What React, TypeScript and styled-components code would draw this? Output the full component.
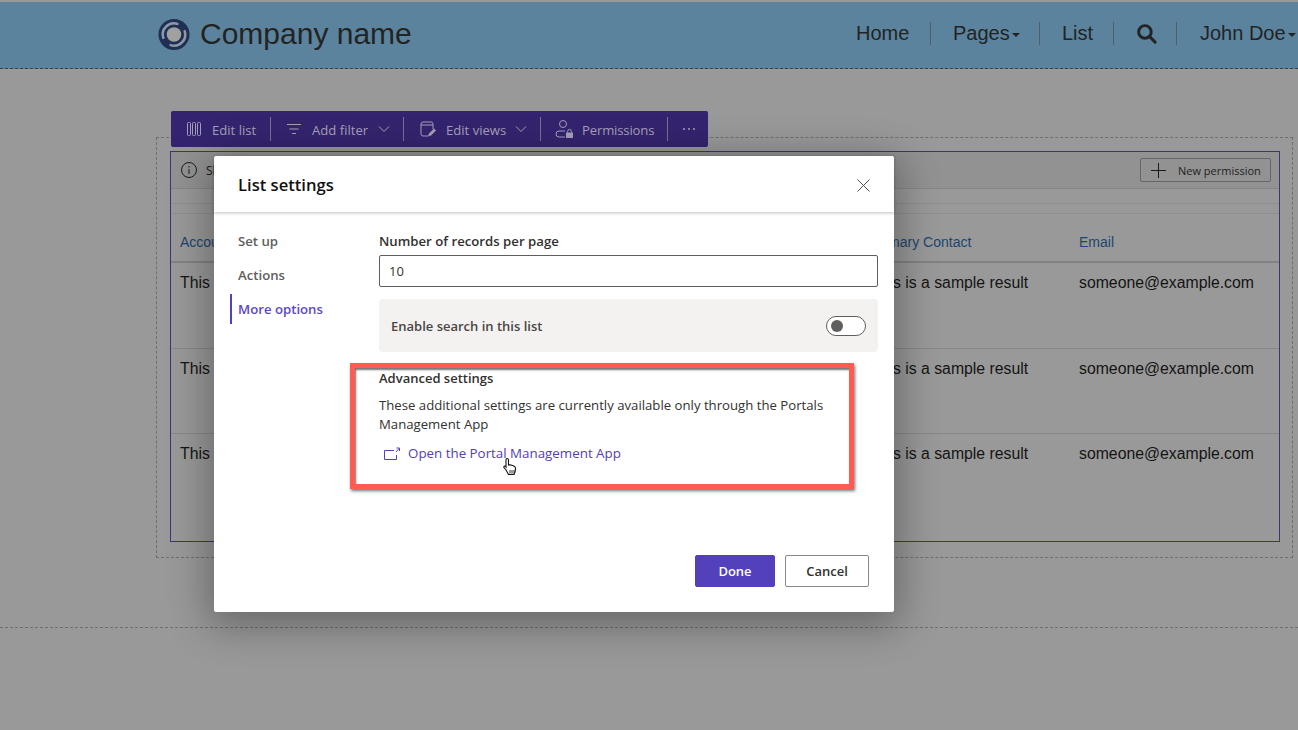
import React from "react";
import styled, { createGlobalStyle } from "styled-components";

const Global = createGlobalStyle`
  html, body { margin: 0; padding: 0; }
  body { background: #999; font-family: "Liberation Sans", Arial, sans-serif; overflow: hidden; }
  * { box-sizing: border-box; }
`;

const ui = `"Open Sans", "Noto Sans", sans-serif`;

const Page = styled.div`
  position: relative;
  width: 1298px;
  height: 730px;
  overflow: hidden;
  background: #999;
  padding-top: 2px;
`;

const Header = styled.header`
  height: 67px;
  background: #5b839d;
  border-bottom: 1px dashed #3d3d3d;
  display: flex;
  align-items: center;
  justify-content: space-between;
  padding: 0 14px 2px 158px;
  color: #232323;
`;

const Brand = styled.div`
  display: flex;
  align-items: center;
  gap: 10px;
  font-size: 30px;
`;

const Nav = styled.nav`
  display: flex;
  align-items: center;
  font-size: 20px;
  margin-bottom: 1px;
`;

const NavItem = styled.span<{ $w: number; $pad?: number; $first?: boolean }>`
  width: ${(p) => p.$w}px;
  height: 23px;
  display: flex;
  align-items: center;
  border-left: ${(p) => (p.$first ? "none" : "1px solid #4e5f6a")};
  padding-left: ${(p) => (p.$first ? 0 : p.$pad ?? 22)}px;
  white-space: nowrap;
`;

const Caret = styled.i`
  display: inline-block;
  margin-left: 2px;
  margin-top: 2px;
  border-top: 4px solid #232323;
  border-left: 4px solid transparent;
  border-right: 4px solid transparent;
`;

const Toolbar = styled.div`
  margin: 42px 0 0 171px;
  width: 537px;
  height: 36px;
  background: #34246f;
  border-radius: 2px;
  display: flex;
  align-items: center;
  color: #a5a0b8;
  font-family: ${ui};
  font-size: 13.1px;
  position: relative;
  z-index: 1;
`;

const ToolItem = styled.div<{ $w: number; $pad: number; $gap: number; $last?: boolean }>`
  width: ${(p) => p.$w}px;
  height: 24px;
  padding-left: ${(p) => p.$pad}px;
  display: flex;
  align-items: center;
  gap: ${(p) => p.$gap}px;
  border-right: ${(p) => (p.$last ? "none" : "1px solid #77708f")};
  white-space: nowrap;
`;

const ToolLabel = styled.span<{ $tight?: boolean }>`
  padding-top: 1px;
  letter-spacing: ${(p) => (p.$tight ? "-0.15px" : "0")};
`;

const Stage = styled.div`
  margin: -10px 5px 0 156px;
  height: 421px;
  border: 1px dashed #6f6f6f;
  padding: 13px 12px 15px 13px;
`;

const ListPanel = styled.div`
  height: 391px;
  border: 1px solid #3d3570;
`;

const ListBar = styled.div`
  height: 37px;
  background: #929292;
  border-bottom: 1px solid #868686;
  display: flex;
  align-items: center;
  justify-content: space-between;
  padding: 0 8px 0 10px;
  font-family: ${ui};
  font-size: 12px;
  color: #1c1c1c;
`;

const Notice = styled.div`
  display: flex;
  align-items: center;
  gap: 9px;
`;

const NewButton = styled.div`
  width: 131px;
  height: 24px;
  border: 1px solid #666;
  border-radius: 2px;
  display: flex;
  align-items: center;
  gap: 12px;
  padding-left: 10px;
  font-size: 11px;
  color: #1f1f1f;
`;

const Spacer = styled.div<{ $h: number }>`
  height: ${(p) => p.$h}px;
  border-bottom: 1px solid #8e8e8e;
`;

const HeadRow = styled.div`
  display: grid;
  grid-template-columns: 691px 208px 1fr;
  padding: 0 0 11px 9px;
  height: 49px;
  align-items: end;
  border-bottom: 2px solid #828282;
  font-size: 14px;
  color: #1d4570;
  white-space: nowrap;
`;

const Row = styled.div<{ $h: number; $last?: boolean }>`
  display: grid;
  grid-template-columns: 691px 208px 1fr;
  padding: 11px 0 0 9px;
  height: ${(p) => p.$h}px;
  align-items: start;
  border-bottom: ${(p) => (p.$last ? "none" : "1px solid #878787")};
  font-size: 15.8px;
  color: #141414;
  white-space: nowrap;
`;

const Bottom = styled.div`
  margin-top: 69px;
  border-top: 1px dashed #6f6f6f;
`;

const Modal = styled.section`
  position: absolute;
  left: 214px;
  top: 156px;
  width: 680px;
  height: 456px;
  background: #fff;
  border-radius: 2px;
  box-shadow: 0 8px 40px 6px rgba(0, 0, 0, 0.32);
  font-family: ${ui};
  color: #323130;
  display: flex;
  flex-direction: column;
  z-index: 2;
`;

const ModalHead = styled.div`
  height: 56px;
  flex: none;
  display: flex;
  align-items: center;
  justify-content: space-between;
  padding: 0 24px 0 24px;
  box-shadow: 0 1px 3px rgba(0, 0, 0, 0.25);
`;

const Title = styled.h2`
  margin: 0;
  font-size: 16.6px;
  font-weight: 600;
  color: #111;
`;

const CloseWrap = styled.span`
  display: flex;
  margin-top: 2px;
`;

const ModalBody = styled.div`
  flex: 1;
  display: flex;
  padding: 14px 16px 0 16px;
`;

const SideNav = styled.div`
  width: 149px;
  flex: none;
  display: flex;
  flex-direction: column;
  gap: 4px;
`;

const SideItem = styled.div<{ $active?: boolean }>`
  height: 30px;
  display: flex;
  align-items: center;
  padding-left: ${(p) => (p.$active ? 6 : 8)}px;
  border-left: ${(p) => (p.$active ? "2px solid #5340bb" : "none")};
  font-size: 13.2px;
  font-weight: 600;
  color: ${(p) => (p.$active ? "#5b49c7" : "#605e5c")};
`;

const Content = styled.div`
  flex: 1;
  display: flex;
  flex-direction: column;
`;

const Label = styled.div`
  font-size: 13.2px;
  font-weight: 600;
  line-height: 18px;
  margin-top: 6px;
  margin-bottom: 5px;
`;

const TextBox = styled.div`
  height: 32px;
  border: 1px solid #605e5c;
  border-radius: 2px;
  display: flex;
  align-items: center;
  padding-left: 9px;
  font-size: 13px;
`;

const TogglePanel = styled.div`
  margin-top: 12px;
  height: 53px;
  background: #f3f2f1;
  border-radius: 4px;
  display: flex;
  align-items: center;
  justify-content: space-between;
  padding: 0 12px;
  font-size: 13px;
  font-weight: 600;
  color: #484644;
`;

const Toggle = styled.div`
  width: 40px;
  height: 20px;
  border: 1px solid #605e5c;
  border-radius: 10px;
  background: #fff;
  padding: 3px 4px;
`;

const Knob = styled.div`
  width: 12px;
  height: 12px;
  border-radius: 50%;
  background: #605e5c;
`;

const SubHead = styled.div`
  margin-top: 17px;
  font-size: 13px;
  font-weight: 600;
  line-height: 18px;
`;

const Para = styled.p`
  margin: 9px 0 0;
  width: 470px;
  font-size: 13.18px;
  line-height: 19px;
  color: #323130;
`;

const LinkRow = styled.div`
  margin-top: 10px;
  padding-left: 5px;
  display: flex;
  align-items: center;
  gap: 8px;
  font-size: 13.35px;
  line-height: 19px;
  color: #5340bb;
`;

const Footer = styled.div`
  flex: none;
  height: 57px;
  display: flex;
  justify-content: flex-end;
  gap: 10px;
  padding-right: 25px;
`;

const Btn = styled.div<{ $primary?: boolean }>`
  width: ${(p) => (p.$primary ? 80 : 84)}px;
  height: 32px;
  border-radius: 2px;
  border: 1px solid ${(p) => (p.$primary ? "#5340bb" : "#8a8886")};
  background: ${(p) => (p.$primary ? "#5340bb" : "#fff")};
  color: ${(p) => (p.$primary ? "#fff" : "#323130")};
  font-size: 13px;
  font-weight: 600;
  display: flex;
  align-items: center;
  justify-content: center;
`;

const Callout = styled.div`
  position: absolute;
  left: 350px;
  top: 363px;
  width: 504px;
  height: 126px;
  border: 5px solid #ff5b50;
  box-shadow: 1px 2px 3px rgba(0, 0, 0, 0.55), inset 1px 2px 2px rgba(0, 0, 0, 0.55);
  pointer-events: none;
  z-index: 3;
`;

const Pointer = styled.svg`
  position: absolute;
  left: 503px;
  top: 457px;
  z-index: 4;
`;

const Logo = () => (
  <svg width="32" height="33" viewBox="0 0 33 33">
    <circle cx="16.5" cy="16.5" r="16" fill="#1f3054" />
    <path d="M5.5 20A11.5 11.5 0 0 1 20 5.5" fill="none" stroke="#8f98a8" strokeWidth="2.6" strokeLinecap="round" />
    <path d="M27.5 13A11.5 11.5 0 0 1 13 27.5" fill="none" stroke="#8f98a8" strokeWidth="2.6" strokeLinecap="round" />
    <circle cx="16.5" cy="16.5" r="7.5" fill="#a0a0a0" />
  </svg>
);

const stroke = { fill: "none", stroke: "currentColor", strokeWidth: 1 };

const ColumnsIcon = () => (
  <svg width="16" height="16" viewBox="0 0 16 16" {...stroke}>
    <rect x="1.5" y="1.5" width="3" height="13" rx="1" />
    <rect x="6.5" y="1.5" width="3" height="13" rx="1" />
    <rect x="11.5" y="1.5" width="3" height="13" rx="1" />
  </svg>
);
const FilterIcon = () => (
  <svg width="16" height="16" viewBox="0 0 16 16" {...stroke}>
    <path d="M1 3.5h14M3.5 8h9M6 12.5h4" />
  </svg>
);
const Chevron = () => (
  <svg width="12" height="12" viewBox="0 0 12 12" {...stroke}>
    <path d="M1 3.5 6 8.5 11 3.5" />
  </svg>
);
const ViewsIcon = () => (
  <svg width="18" height="18" viewBox="0 0 18 18" {...stroke}>
    <path d="M9 16H4a2 2 0 0 1-2-2V4a2 2 0 0 1 2-2h8a2 2 0 0 1 2 2v5M2 5h12" />
    <path d="M9 16.5l1-3 5-5 2 2-5 5Z" fill="currentColor" stroke="none" />
  </svg>
);
const PermIcon = () => (
  <svg width="20" height="20" viewBox="0 0 20 20" {...stroke}>
    <circle cx="8" cy="5" r="3.5" />
    <path d="M10 12H4a2.5 2.5 0 0 0 0 6h6" />
    <path d="M11 13.5h7V19h-7Z" fill="currentColor" stroke="none" />
    <path d="M12.7 13.5v-1.3a1.8 1.8 0 0 1 3.6 0v1.3" />
  </svg>
);
const MoreIcon = () => (
  <svg width="14" height="4" viewBox="0 0 14 4" fill="currentColor">
    <circle cx="2" cy="2" r="1" />
    <circle cx="7" cy="2" r="1" />
    <circle cx="12" cy="2" r="1" />
  </svg>
);
const InfoIcon = () => (
  <svg width="16" height="16" viewBox="0 0 16 16" {...stroke}>
    <circle cx="8" cy="8" r="7.5" />
    <path d="M8 7v5M8 4v1.5" />
  </svg>
);
const PlusIcon = () => (
  <svg width="15" height="15" viewBox="0 0 15 15" fill="none" stroke="#1a1a1a">
    <path d="M7.5 0v15M0 7.5h15" />
  </svg>
);
const CloseIcon = () => (
  <svg width="13" height="13" viewBox="0 0 13 13" fill="none" stroke="#505050">
    <path d="M.5.5l12 12M12.5.5l-12 12" />
  </svg>
);
const OpenIcon = () => (
  <svg width="16" height="14" viewBox="0 0 16 14" fill="none" stroke="#5340bb">
    <path d="M10 3.5H.5v9h12V8" />
    <path d="M12 5l3-3.5M12.5 1h3v3" />
  </svg>
);
const SearchIcon = () => (
  <svg width="21" height="21" viewBox="0 0 20 20" fill="none" stroke="#232323" strokeWidth="2.8">
    <circle cx="8.5" cy="8.5" r="6" />
    <path d="M13 13l5.2 5.2" strokeLinecap="round" />
  </svg>
);

const sample = "This is a sample result";
const rows = [
  { id: "r1", h: 86 },
  { id: "r2", h: 85 },
  { id: "r3", h: 85, last: true },
];

export default function App() {
  return (
    <Page>
      <Global />
      <Header>
        <Brand>
          <Logo />
          <span>Company name</span>
        </Brand>
        <Nav>
          <NavItem $w={74} $first>Home</NavItem>
          <NavItem $w={109}>Pages<Caret /></NavItem>
          <NavItem $w={74}>List</NavItem>
          <NavItem $w={63}><SearchIcon /></NavItem>
          <NavItem $w={108} $pad={23}>John Doe<Caret /></NavItem>
        </Nav>
      </Header>

      <Toolbar>
        <ToolItem $w={100} $pad={15} $gap={10}><ColumnsIcon /><ToolLabel>Edit list</ToolLabel></ToolItem>
        <ToolItem $w={133} $pad={15} $gap={10}><FilterIcon /><ToolLabel>Add filter</ToolLabel><Chevron /></ToolItem>
        <ToolItem $w={137} $pad={15} $gap={9}><ViewsIcon /><ToolLabel>Edit views</ToolLabel><Chevron /></ToolItem>
        <ToolItem $w={127} $pad={14} $gap={7}><PermIcon /><ToolLabel $tight>Permissions</ToolLabel></ToolItem>
        <ToolItem $w={40} $pad={14} $gap={0} $last><MoreIcon /></ToolItem>
      </Toolbar>

      <Stage>
        <ListPanel>
          <ListBar>
            <Notice><InfoIcon /><span>Showing sample data</span></Notice>
            <NewButton><PlusIcon /><span>New permission</span></NewButton>
          </ListBar>
          <Spacer $h={15} />
          <Spacer $h={10} />
          <HeadRow>
            <span>Account Name</span>
            <span>Primary Contact</span>
            <span>Email</span>
          </HeadRow>
          {rows.map((r) => (
            <Row key={r.id} $h={r.h} $last={r.last}>
              <span>{sample}</span>
              <span>{sample}</span>
              <span>someone@example.com</span>
            </Row>
          ))}
        </ListPanel>
      </Stage>
      <Bottom />

      <Modal>
        <ModalHead>
          <Title>List settings</Title>
          <CloseWrap><CloseIcon /></CloseWrap>
        </ModalHead>
        <ModalBody>
          <SideNav>
            <SideItem>Set up</SideItem>
            <SideItem>Actions</SideItem>
            <SideItem $active>More options</SideItem>
          </SideNav>
          <Content>
            <Label>Number of records per page</Label>
            <TextBox>10</TextBox>
            <TogglePanel>
              <span>Enable search in this list</span>
              <Toggle><Knob /></Toggle>
            </TogglePanel>
            <SubHead>Advanced settings</SubHead>
            <Para>These additional settings are currently available only through the Portals Management App</Para>
            <LinkRow><OpenIcon /><span>Open the Portal Management App</span></LinkRow>
          </Content>
        </ModalBody>
        <Footer>
          <Btn $primary>Done</Btn>
          <Btn>Cancel</Btn>
        </Footer>
      </Modal>

      <Callout />
      <Pointer width="16" height="20" viewBox="0 0 16 20">
        <path d="M4 1.5c1 0 1.5.7 1.5 1.5v5l1-.3 1 .2 1 .3 1.2.4 1.8.8c.7.5 1 1 1 2 0 2-.5 4-1.5 6H5.5L3 13 1 10.5c-.5-1 .5-1.800 1.500-1.200L3 10V3c0-1 .3-1.500 1-1.500Z" fill="#fff" stroke="#111" strokeWidth="1.1" />
        <path d="M7 13v3M9 13v3M11 13v3" stroke="#333" />
      </Pointer>
    </Page>
  );
}
